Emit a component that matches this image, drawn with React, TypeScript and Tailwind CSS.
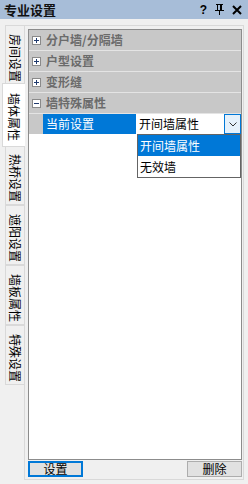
import React from 'react'

const font = { fontFamily: '"Noto Sans CJK SC", "Noto Sans", sans-serif' }

const tabs = ['房间设置', '墙体属性', '热桥设置', '遮阳设置', '墙板属性', '特殊设置']
const cats = ['分户墙/分隔墙', '户型设置', '变形缝']

function Box(props: { open: boolean }) {
  return (
    <svg width="9" height="9" viewBox="0 0 9 9" className="shrink-0">
      <rect x="0.5" y="0.5" width="8" height="8" fill="#fff" stroke="#8a8a8a" />
      <line x1="2" y1="4.5" x2="7" y2="4.5" stroke="#1f3a6e" />
      {!props.open && <line x1="4.5" y1="2" x2="4.5" y2="7" stroke="#1f3a6e" />}
    </svg>
  )
}

function Tab(props: { label: string; active: boolean }) {
  if (props.active) {
    return (
      <div className="relative z-10 -my-[2px] ml-[2px] flex h-[64px] w-[23px] justify-center border border-r-0 border-[#d9d9d9] bg-white pt-[9px]">
        <span className="text-[12px] leading-[12px] text-black [writing-mode:vertical-rl] [text-orientation:sideways]">
          {props.label}
        </span>
      </div>
    )
  }
  return (
    <div className="ml-[5px] flex h-[60px] w-[19px] justify-center border border-r-0 border-[#d9d9d9] bg-[#f0f0f0] pt-[8px]">
      <span className="text-[12px] leading-[12px] text-black [writing-mode:vertical-rl] [text-orientation:sideways]">
        {props.label}
      </span>
    </div>
  )
}

export default function App() {
  return (
    <div className="flex h-[484px] w-[248px] flex-col bg-[#f0f0f0]" style={font}>
      {/* title bar */}
      <div className="flex h-[19px] items-center justify-between bg-[#a7bdd8] pl-[4px] pr-[6px]">
        <span className="text-[13px] font-bold leading-[19px] text-[#111]">专业设置</span>
        <div className="flex items-center gap-[8px]">
          <span className="text-[12px] font-bold leading-none text-black" style={{ fontFamily: '"Liberation Sans", sans-serif' }}>?</span>
          <svg width="9" height="11" viewBox="0 0 9 11">
            <rect x="1" y="0" width="7" height="1" fill="#000" />
            <rect x="2" y="1" width="1" height="5" fill="#000" />
            <rect x="5" y="1" width="2" height="5" fill="#000" />
            <rect x="0" y="6" width="9" height="1" fill="#000" />
            <rect x="4" y="7" width="1" height="4" fill="#000" />
          </svg>
          <svg width="10" height="10" viewBox="0 0 10 10">
            <path d="M1 1L9 9M9 1L1 9" stroke="#000" strokeWidth="2" />
          </svg>
        </div>
      </div>

      <div className="mt-[6px] flex">
        {/* vertical tabs */}
        <div className="flex w-[24px] flex-col">
          {tabs.map((t, i) => (
            <Tab key={t} label={t} active={i === 1} />
          ))}
        </div>

        {/* panel */}
        <div className="flex h-[455px] w-[220px] flex-col border border-[#d9d9d9] bg-[#f0f0f0] pl-[3px] pr-[1px] pt-[3px]">
          <div className="flex h-[431px] w-[214px] flex-col border border-[#8c8c8c] bg-white">
            {cats.map((c) => (
              <div key={c} className="flex h-[21px] shrink-0 items-center gap-[5px] border-b border-[#e4e4e4] bg-[#c8c8c8] pl-[3px]">
                <Box open={false} />
                <span className="text-[12px] font-bold leading-none text-[#6b6b6b]">{c}</span>
              </div>
            ))}
            <div className="flex h-[21px] shrink-0 items-center gap-[5px] border-b border-[#e4e4e4] bg-[#c8c8c8] pl-[3px]">
              <Box open={true} />
              <span className="text-[12px] font-bold leading-none text-[#6b6b6b]">墙特殊属性</span>
            </div>
            <div className="flex h-[20px] shrink-0">
              <div className="w-[14px] bg-[#c8c8c8]" />
              <div className="flex w-[93px] items-center bg-[#0078d7] pl-[3px] text-[12px] leading-none text-white">
                当前设置
              </div>
              <div className="flex flex-1 items-center pl-[3px] text-[12px] leading-none text-black">
                开间墙属性
              </div>
              <div className="flex w-[17px] items-center justify-center border border-[#0078d7] bg-[#e5f1fb]">
                <svg width="8" height="5" viewBox="0 0 8 5">
                  <path d="M0.5 0.5L4 4L7.5 0.5" stroke="#333" fill="none" />
                </svg>
              </div>
            </div>
            <div className="ml-[108px] flex w-[104px] flex-col border border-[#646464] bg-white">
              <div className="flex h-[21px] items-center bg-[#0078d7] pl-[2px] text-[12px] leading-none text-white">
                开间墙属性
              </div>
              <div className="flex h-[21px] items-center pl-[2px] text-[12px] leading-none text-black">
                无效墙
              </div>
            </div>
          </div>

          {/* buttons */}
          <div className="mt-[1px] flex h-[16px] justify-between">
            <button className="flex w-[55px] items-center justify-center border-2 border-[#0078d7] bg-[#e1e1e1] text-[12px] leading-none text-black">
              设置
            </button>
            <button className="flex w-[55px] items-center justify-center border border-[#adadad] bg-[#e1e1e1] text-[12px] leading-none text-black">
              删除
            </button>
          </div>
        </div>
      </div>
    </div>
  )
}
